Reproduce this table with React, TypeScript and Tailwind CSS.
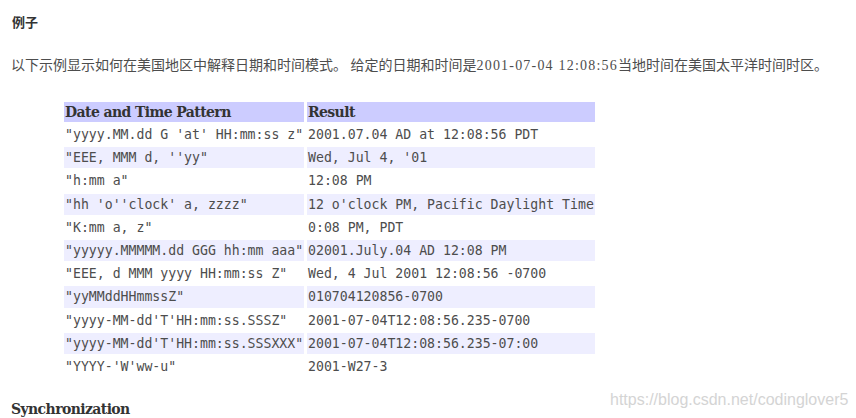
import React from "react";

const rows: [string, string][] = [
  ['"yyyy.MM.dd G \'at\' HH:mm:ss z"', "2001.07.04 AD at 12:08:56 PDT"],
  ['"EEE, MMM d, \'\'yy"', "Wed, Jul 4, '01"],
  ['"h:mm a"', "12:08 PM"],
  ['"hh \'o\'\'clock\' a, zzzz"', "12 o'clock PM, Pacific Daylight Time"],
  ['"K:mm a, z"', "0:08 PM, PDT"],
  ['"yyyyy.MMMMM.dd GGG hh:mm aaa"', "02001.July.04 AD 12:08 PM"],
  ['"EEE, d MMM yyyy HH:mm:ss Z"', "Wed, 4 Jul 2001 12:08:56 -0700"],
  ['"yyMMddHHmmssZ"', "010704120856-0700"],
  ['"yyyy-MM-dd\'T\'HH:mm:ss.SSSZ"', "2001-07-04T12:08:56.235-0700"],
  ['"yyyy-MM-dd\'T\'HH:mm:ss.SSSXXX"', "2001-07-04T12:08:56.235-07:00"],
  ['"YYYY-\'W\'ww-u"', "2001-W27-3"],
];

export default function App() {
  return (
    <div className="relative w-[856px] h-[418px] overflow-hidden bg-white text-[#333]">
      <div className="pl-[12px] pt-[12px] text-[13px] leading-[20px] font-bold font-['Noto_Sans_CJK_SC',sans-serif]">
        例子
      </div>
      <p className="pl-[11px] mt-[24px] text-[14px] leading-[20px] text-[#4d4d4d] font-['Liberation_Serif','Noto_Sans_CJK_SC',serif] whitespace-nowrap">
        以下示例显示如何在美国地区中解释日期和时间模式。 给定的日期和时间是<span className="tracking-[1.2px]">2001-07-04 12:08:56</span>当地时间在美国太平洋时间时区。
      </p>
      <div className="ml-[61px] mt-[24px]">
        <table className="border-separate border-spacing-x-[3px] border-spacing-y-[2px] table-fixed w-[534px]">
          <colgroup>
            <col className="w-[240px]" />
            <col className="w-[288px]" />
          </colgroup>
          <thead>
            <tr className="bg-[#ccccff]">
              <th className="h-[20px] p-0 pl-[1px] text-left text-[14px] leading-[20px] font-bold text-[#333] font-['DejaVu_Serif',serif] tracking-[-0.6px]">
                Date and Time Pattern
              </th>
              <th className="h-[20px] p-0 pl-[1px] text-left text-[14px] leading-[20px] font-bold text-[#333] font-['DejaVu_Serif',serif] tracking-[-0.6px]">
                Result
              </th>
            </tr>
          </thead>
          <tbody>
            {rows.map(([a, b], i) => (
              <tr key={i} className={i % 2 === 1 ? "bg-[#eeeeff]" : "bg-white"}>
                <td className="h-[21.2px] p-0 pl-[1px] text-[13.2px] leading-[21px] text-[#4d4d4d] font-['DejaVu_Sans_Mono',monospace] whitespace-pre">
                  {a}
                </td>
                <td className="h-[21.2px] p-0 pl-[1px] text-[13.2px] leading-[21px] text-[#4d4d4d] font-['DejaVu_Sans_Mono',monospace] whitespace-pre">
                  {b}
                </td>
              </tr>
            ))}
          </tbody>
        </table>
      </div>
      <div className="pl-[11px] mt-[20px] text-[14px] leading-[20px] font-bold text-[#333] font-['DejaVu_Serif',serif] tracking-[-0.6px]">
        Synchronization
      </div>
      <div className="absolute left-[610px] top-[390px] text-[16px] leading-[20px] text-[#d4d4d4] font-['Liberation_Sans_Narrow','Liberation_Sans',sans-serif] whitespace-nowrap">
        https://blog.csdn.net/codinglover5
      </div>
    </div>
  );
}
